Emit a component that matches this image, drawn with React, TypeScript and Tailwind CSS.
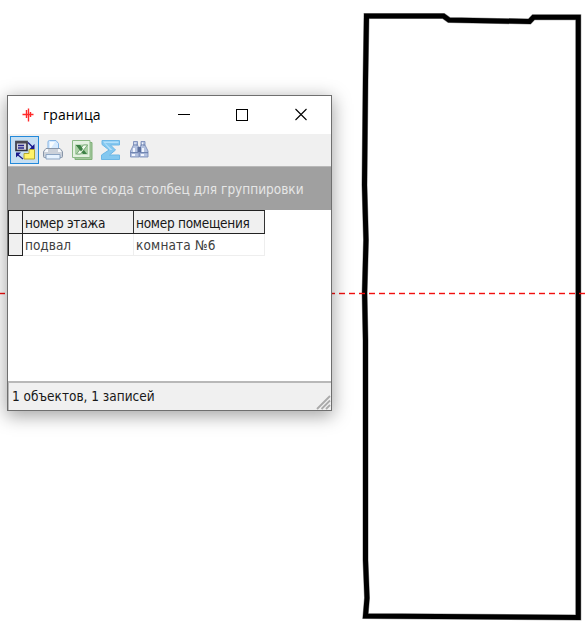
import React from "react";

function Drawing() {
  return (
    <svg className="block h-[630px] w-[588px]" viewBox="0 0 588 630" fill="none">
      <path
        d="M366.5 16 L443.5 16 L449 20 L529.5 21.5 L533.5 17.2 L578.3 17.2 L578.3 617.5 L365.5 616 L367 598 L365.5 560 L365.5 340 L364.6 293 L366 240 L364.5 185 L365.5 80 Z"
        stroke="#9a9a9a"
        strokeWidth="6"
      />
      <path
        d="M366.5 16 L443.5 16 L449 20 L529.5 21.5 L533.5 17.2 L578.3 17.2 L578.3 617.5 L365.5 616 L367 598 L365.5 560 L365.5 340 L364.6 293 L366 240 L364.5 185 L365.5 80 Z"
        stroke="#000"
        strokeWidth="5"
      />
      <path d="M-1 293.5 H585" stroke="#ff0000" strokeOpacity=".2" strokeWidth="3" strokeDasharray="6 4" />
      <path d="M-1 293.5 H585" stroke="#f01010" strokeWidth="1" strokeDasharray="6 4" />
    </svg>
  );
}

function SwapIcon() {
  return (
    <svg className="size-[22px]" viewBox="0 0 22 22">
      <path d="M2 2.500h11v9H2z" fill="#d2d2dc" stroke="#30303c" strokeWidth="1.600" />
      <path d="M2 2h11v2.500H2z" fill="#484852" />
      <path d="M4 6.500h6M4 9h6" stroke="#26268c" strokeWidth="1.300" />
      <path d="M14 3.500 19 8.500" stroke="#17178c" strokeWidth="1.300" />
      <path d="M20.500 5v5h-5zM2 13.500h5l-5 5z" fill="#17178c" />
      <path d="M4 16l5 4" stroke="#17178c" strokeWidth="1.300" />
      <path d="M15 10.500h5.500v9.500H10v-5.500h5z" fill="#fff36a" stroke="#b5a82e" />
    </svg>
  );
}

function PrinterIcon() {
  return (
    <svg className="size-[22px]" viewBox="0 0 22 22">
      <path d="M6 10V3q0-1.500 1.500-1.500H14l2.500 3V10z" fill="#d7ebff" stroke="#83b3e4" />
      <path d="M8 3h5l-4 6H8z" fill="#f8fcff" />
      <path d="M4 9.500h14l2.500 3v5q0 1-1 1h-17q-1 0-1-1v-5z" fill="#cbd1da" stroke="#8996a9" />
      <path d="M4 10h2v3h10v-3h2l1.500 3H2.500z" fill="#f6f8fb" />
      <path d="M4 15.500h14v4.500H4z" fill="#e7f3ff" stroke="#8ba4c3" />
    </svg>
  );
}

function SheetIcon() {
  return (
    <svg className="size-[22px]" viewBox="0 0 22 22">
      <path d="M4 3.500h17v17H4z" fill="#a3c89c" stroke="#7fb079" />
      <path d="M1.500 1.500h17.500v17H1.500z" fill="#e4f1e1" stroke="#8cb987" />
      <path d="M4 5.500h13v10H4z" fill="#a9cfa4" />
      <path d="M5 6h4l7 9h-4z" fill="#3c8044" />
      <path d="M12.500 6h4l-7 9h-4z" fill="#f1fbed" stroke="#478448" strokeWidth=".6" />
      <path d="M5 6h4l3 4-2 2.500z" fill="#3c8044" />
    </svg>
  );
}

function SigmaIcon() {
  return (
    <svg className="size-[22px]" viewBox="0 0 22 22">
      <path d="M2 1.500h17.500v4.500H10.500l5 5-6 5h10v4.500H1.500v-4.500L9 11 2 5.500z" fill="#84c8f0" stroke="#6db7e6" />
      <path d="M3 2.500h15.500v1.500H5l7.500 7H10z" fill="#b3e0fb" />
    </svg>
  );
}

function BinocularsIcon() {
  return (
    <svg className="size-[22px]" viewBox="0 0 22 22">
      <path d="M4.500 2.500h4v3.500L10 9v9H1.500v-6l3-6zM12 2.500h4V6l3 6v6h-8.500V9L12 6z" fill="#b4c2df" stroke="#7e90bb" strokeWidth=".9" />
      <path d="M8.500 8h3.500v5H8.500z" fill="#5d709e" />
      <path d="M4 9h2v4H4zM13 9h2v4h-2zM5.500 3.500h1V7h-1zM13 3.500h1V7h-1zM3 15h3v2H3zM12 15h3v2h-3z" fill="#f2f6ff" />
      <path d="M1.500 13.700h8M11 13.700h8M4.500 6h4M12 6h4" stroke="#6278a8" />
    </svg>
  );
}

function TitleBar() {
  return (
    <div className="flex h-[38px] shrink-0 items-center bg-white font-['Open_Sans',sans-serif]">
      <svg className="ml-[14px] h-4 w-3" viewBox="0 0 12 16">
        <path d="M4.500 3v8M6.500 1.500v13M0.500 7.500h11M8.500 5v5" stroke="#ff2a2a" strokeWidth="1.400" />
      </svg>
      <span className="mt-[-2px] ml-[9px] w-[59px] whitespace-nowrap text-[14px] tracking-[0.15px] text-black">граница</span>
      <svg className="mt-[-2px] ml-[76px] h-[13px] w-[130px]" viewBox="0 0 130 13" fill="none" stroke="#000" shapeRendering="crispEdges">
        <path d="M0 6.500h12M58.500 1.500h11v11h-11z" />
        <path d="M117.500 1l11 11M128.500 1l-11 11" shapeRendering="auto" strokeWidth="1.100" />
      </svg>
    </div>
  );
}

function Toolbar() {
  return (
    <div className="flex h-8 shrink-0 items-center bg-[#f0f0f0] pl-[2px]">
      <div className="flex h-[28px] w-[29px] items-center justify-center border border-[#2389da] bg-[#c6dff3]"><SwapIcon /></div>
      <div className="ml-[3px] flex gap-[7px]">
        <PrinterIcon />
        <SheetIcon />
        <SigmaIcon />
        <BinocularsIcon />
      </div>
    </div>
  );
}

function Grid() {
  return (
    <div className="flex-1 bg-white text-[13.5px] leading-[23px] whitespace-nowrap">
      <div className="flex h-6 w-[257px] border-t border-b border-[#222] bg-[#f0f0f0] leading-[25px] text-[#181818]">
        <div className="w-[15px] border-x border-[#222]" />
        <div className="w-[111px] border-r border-[#333] pl-[2px] tracking-[-0.27px]">номер этажа</div>
        <div className="w-[131px] border-r border-[#333] pl-[2px] tracking-[-0.27px]">номер помещения</div>
      </div>
      <div className="flex h-[22px] w-[257px] text-[#404040]">
        <div className="w-[15px] border-x border-b border-[#222] bg-[#f0f0f0]" />
        <div className="w-[111px] border-r border-b border-[#eee] pl-[2px]">подвал</div>
        <div className="w-[131px] border-r border-b border-[#eee] pl-[2px] tracking-[0.15px]">комната №6</div>
      </div>
    </div>
  );
}

function StatusBar() {
  return (
    <div className="flex h-[29px] shrink-0 items-center justify-between border-t-2 border-l border-[#b8b8b8] bg-[#f0f0f0] pl-[3px] text-[13.5px] text-[#181818]">
      <span className="whitespace-nowrap">1 объектов, 1 записей</span>
      <svg className="mt-auto h-4 w-4" viewBox="0 0 16 16">
        <path d="M2 15 15 2M6.500 15 15 6.500M11 15l4-4" stroke="#aaa" strokeWidth="1.800" />
      </svg>
    </div>
  );
}

export default function App() {
  return (
    <div className="relative h-[630px] w-[588px] overflow-hidden bg-white">
      <Drawing />
      <div className="absolute left-[7px] top-[95px] flex h-[316px] w-[325px] flex-col border border-[#6f6f6f] bg-white font-['DejaVu_Sans_Condensed','DejaVu_Sans',sans-serif] shadow-[0_4px_17px_1px_rgba(0,0,0,0.36)]">
        <TitleBar />
        <Toolbar />
        <div className="flex h-11 shrink-0 items-center border-t border-[#b8b8b8] bg-[#a0a0a0] pt-px pl-[9px] text-[13.5px] text-[#e6e6e6]">
          <span className="whitespace-nowrap">Перетащите сюда столбец для группировки</span>
        </div>
        <Grid />
        <StatusBar />
      </div>
    </div>
  );
}
